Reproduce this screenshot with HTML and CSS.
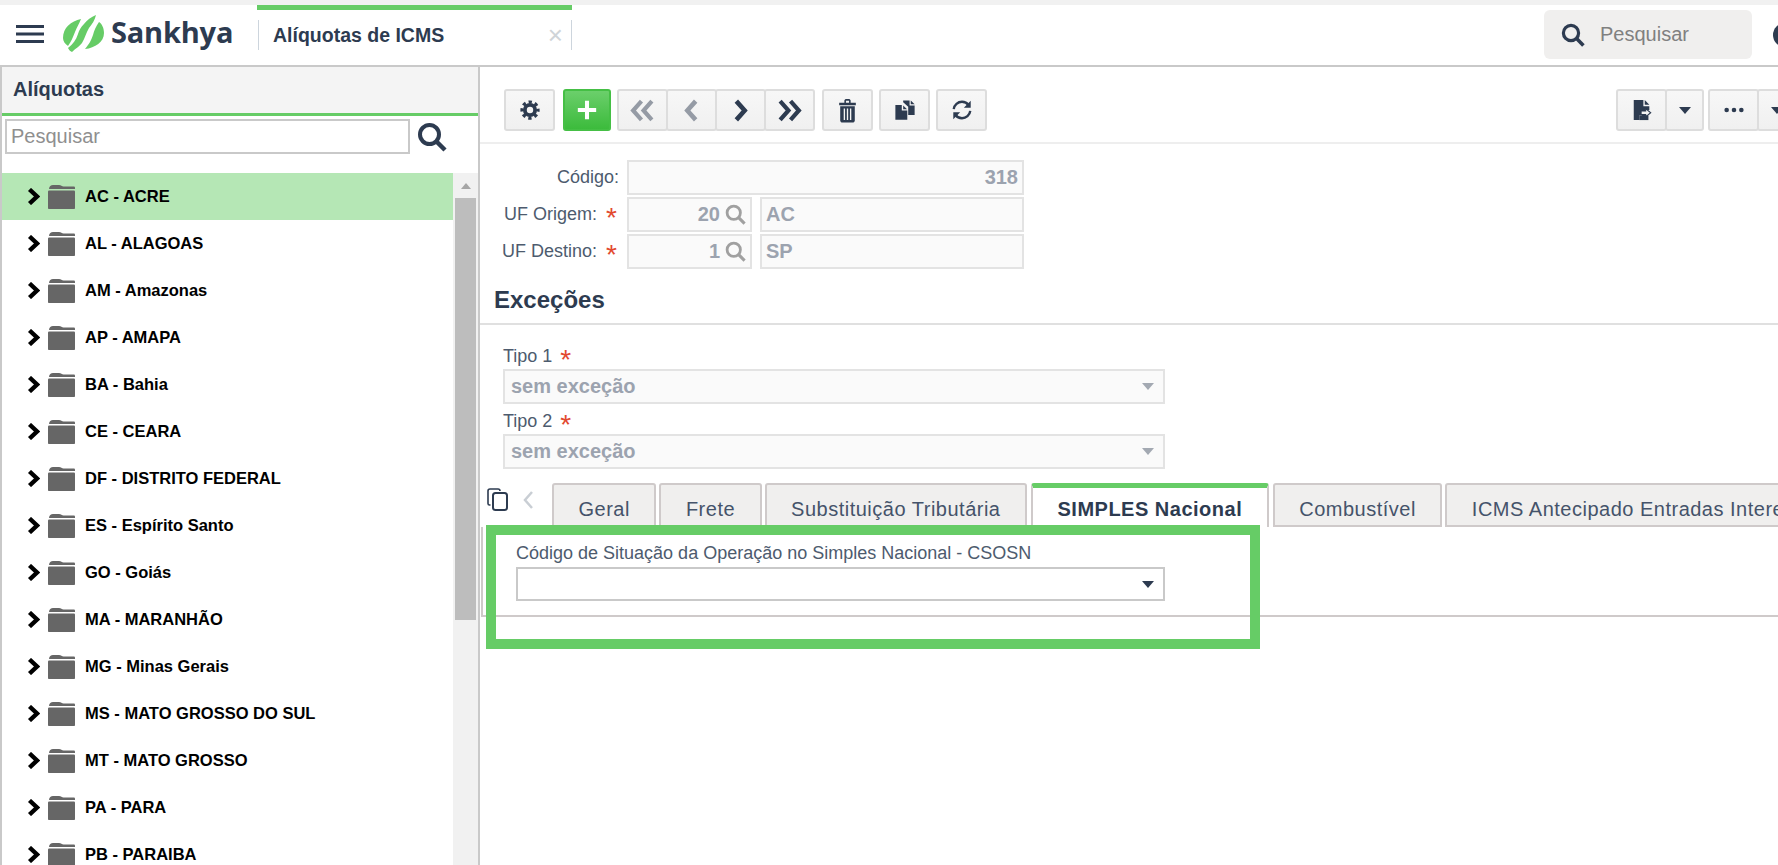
FILE: index.html
```html
<!DOCTYPE html>
<html lang="en">
<head>
  <meta charset="UTF-8" />
  <title>Alíquotas de ICMS | Sankhya</title>
  <link rel="stylesheet" href="styles.css">
</head>
<body>
  <svg class="defs" xmlns="http://www.w3.org/2000/svg">
    <symbol id="i-search" viewBox="0 0 30 30">
      <circle cx="12.5" cy="12.5" r="9.5" fill="none" stroke="currentColor" stroke-width="4"/>
      <path d="M19.5 19.5 L28 28" fill="none" stroke="currentColor" stroke-width="4.5"/>
    </symbol>
    <symbol id="i-arrow" viewBox="0 0 13 17">
      <path d="M2.5 1.5 L10 8.5 L2.5 15.5" fill="none" stroke="currentColor" stroke-width="4.4"/>
    </symbol>
    <symbol id="i-folder" viewBox="0 0 27 25">
      <path d="M1 5 C1 2.5 3 1 5 1 H11 C13 1 14 2.5 15.5 2.5 H26 C26.6 2.5 27 3 27 4 V5 Z" fill="currentColor"/>
      <path d="M0 8 C0 7 .5 6.5 1 6.5 H26 C26.5 6.5 27 7 27 8 V24 C27 24.6 26.5 25 26 25 H1 C.5 25 0 24.6 0 24 Z" fill="currentColor"/>
    </symbol>
    <symbol id="i-double-left" viewBox="0 0 24 22">
      <path d="M11 2 L3 11 L11 20 M21 2 L13 11 L21 20" fill="none" stroke="currentColor" stroke-width="4"/>
    </symbol>
    <symbol id="i-left" viewBox="0 0 24 22">
      <path d="M16 2 L8 11 L16 20" fill="none" stroke="currentColor" stroke-width="4.4"/>
    </symbol>
    <symbol id="i-right" viewBox="0 0 24 22">
      <path d="M8 2 L16 11 L8 20" fill="none" stroke="currentColor" stroke-width="4.4"/>
    </symbol>
    <symbol id="i-double-right" viewBox="0 0 24 22">
      <path d="M3 2 L11 11 L3 20 M13 2 L21 11 L13 20" fill="none" stroke="currentColor" stroke-width="4"/>
    </symbol>
  </svg>

  <div class="top-strip"></div>

  <header class="app-header">
    <svg class="burger" viewBox="0 0 28 18">
      <path d="M0 1.5 H28 M0 9 H28 M0 16.5 H28" stroke="#2d3b50" stroke-width="3"/>
    </svg>
    <svg class="logo-mark" viewBox="0 0 41 37">
      <path d="M0 23 C0 13 8 6 18 4 C16 9 14 12 12 17 C10 22 8 27 5 31 C2 29 0 26 0 23Z" fill="#66cc66"/>
      <path d="M21 9 C24 5 28 2 33 0 C32 5 29 9 26 13 C23 18 22 23 19 28 C17 31 13 33 9 37 C7 36 6 35 5 33 C10 29 13 25 15 19 C16 15 18 12 21 9Z" fill="#66cc66"/>
      <path d="M36 7 C39 9 41 13 41 18 C41 27 32 33 22 34 C26 29 28 26 30 20 C31 16 33 11 36 7Z" fill="#66cc66"/>
    </svg>
    <span class="logo-text">Sankhya</span>
    <div class="page-tab">
      <div class="page-tab-inner">
        <span>Alíquotas de ICMS</span>
        <span class="page-tab-close">×</span>
      </div>
    </div>
    <div class="global-search">
      <svg class="global-search-icon"><use href="#i-search"/></svg>
      <span>Pesquisar</span>
    </div>
    <div class="user-dot"></div>
  </header>

  <div class="main">
    <aside class="side-panel">
      <div class="side-title">Alíquotas</div>
      <div class="side-search">
        <input class="side-input" type="text" placeholder="Pesquisar" />
        <svg class="side-search-icon"><use href="#i-search"/></svg>
      </div>
      <div class="tree">
        <ul class="tree-list">
          <li class="tree-row selected"><svg class="tree-arrow"><use href="#i-arrow"/></svg><svg class="tree-folder"><use href="#i-folder"/></svg>AC - ACRE</li>
          <li class="tree-row"><svg class="tree-arrow"><use href="#i-arrow"/></svg><svg class="tree-folder"><use href="#i-folder"/></svg>AL - ALAGOAS</li>
          <li class="tree-row"><svg class="tree-arrow"><use href="#i-arrow"/></svg><svg class="tree-folder"><use href="#i-folder"/></svg>AM - Amazonas</li>
          <li class="tree-row"><svg class="tree-arrow"><use href="#i-arrow"/></svg><svg class="tree-folder"><use href="#i-folder"/></svg>AP - AMAPA</li>
          <li class="tree-row"><svg class="tree-arrow"><use href="#i-arrow"/></svg><svg class="tree-folder"><use href="#i-folder"/></svg>BA - Bahia</li>
          <li class="tree-row"><svg class="tree-arrow"><use href="#i-arrow"/></svg><svg class="tree-folder"><use href="#i-folder"/></svg>CE - CEARA</li>
          <li class="tree-row"><svg class="tree-arrow"><use href="#i-arrow"/></svg><svg class="tree-folder"><use href="#i-folder"/></svg>DF - DISTRITO FEDERAL</li>
          <li class="tree-row"><svg class="tree-arrow"><use href="#i-arrow"/></svg><svg class="tree-folder"><use href="#i-folder"/></svg>ES - Espírito Santo</li>
          <li class="tree-row"><svg class="tree-arrow"><use href="#i-arrow"/></svg><svg class="tree-folder"><use href="#i-folder"/></svg>GO - Goiás</li>
          <li class="tree-row"><svg class="tree-arrow"><use href="#i-arrow"/></svg><svg class="tree-folder"><use href="#i-folder"/></svg>MA - MARANHÃO</li>
          <li class="tree-row"><svg class="tree-arrow"><use href="#i-arrow"/></svg><svg class="tree-folder"><use href="#i-folder"/></svg>MG - Minas Gerais</li>
          <li class="tree-row"><svg class="tree-arrow"><use href="#i-arrow"/></svg><svg class="tree-folder"><use href="#i-folder"/></svg>MS - MATO GROSSO DO SUL</li>
          <li class="tree-row"><svg class="tree-arrow"><use href="#i-arrow"/></svg><svg class="tree-folder"><use href="#i-folder"/></svg>MT - MATO GROSSO</li>
          <li class="tree-row"><svg class="tree-arrow"><use href="#i-arrow"/></svg><svg class="tree-folder"><use href="#i-folder"/></svg>PA - PARA</li>
          <li class="tree-row"><svg class="tree-arrow"><use href="#i-arrow"/></svg><svg class="tree-folder"><use href="#i-folder"/></svg>PB - PARAIBA</li>
        </ul>
        <div class="scrollbar">
          <div class="scroll-up"></div>
          <div class="scroll-thumb"></div>
        </div>
      </div>
    </aside>

    <section class="content">
      <div class="toolbar">
        <div class="tool-set">
          <button class="tool-btn">
            <svg class="tool-icon" viewBox="0 0 24 24">
              <circle cx="12" cy="12" r="5.6" fill="none" stroke="currentColor" stroke-width="4.2"/>
              <circle cx="12" cy="12" r="8.8" fill="none" stroke="currentColor" stroke-width="3.4" stroke-dasharray="3.6 3.31" stroke-dashoffset="1.8"/>
            </svg>
          </button>
          <button class="tool-btn add-btn">
            <svg class="tool-icon" viewBox="0 0 24 24"><path d="M12 2 V22 M2 12 H22" stroke="#fff" stroke-width="4.4"/></svg>
          </button>
          <div class="btn-group nav-group">
            <button class="tool-btn muted"><svg class="nav-icon"><use href="#i-double-left"/></svg></button>
            <button class="tool-btn muted"><svg class="nav-icon"><use href="#i-left"/></svg></button>
            <button class="tool-btn"><svg class="nav-icon"><use href="#i-right"/></svg></button>
            <button class="tool-btn"><svg class="nav-icon"><use href="#i-double-right"/></svg></button>
          </div>
          <button class="tool-btn">
            <svg class="tool-icon tool-icon-big" viewBox="0 0 24 24">
              <path d="M4 4.5 H9 V2.5 C9 1.5 10 1 11 1 H13 C14 1 15 1.5 15 2.5 V4.5 H20 V7 H4 Z M10.500 4.500 H13.500 V2.700 H10.500 Z" fill="currentColor" fill-rule="evenodd"/>
              <path d="M5 8 H19 V21.500 C19 22.500 18 23.500 17 23.500 H7 C6 23.500 5 22.500 5 21.500 Z" fill="currentColor"/>
              <path d="M9 10 V21 M12 10 V21 M15 10 V21" stroke="#f3f3f3" stroke-width="1.300"/>
            </svg>
          </button>
          <button class="tool-btn">
            <svg class="tool-icon" viewBox="0 0 24 24">
              <path d="M10 1.500 H17 V7 H22.500 V17.500 H15.500 V8.500 L10 3.500 Z" fill="currentColor"/>
              <path d="M18.300 1.500 L22.500 5.700 H18.300 Z" fill="currentColor"/>
              <path d="M1.500 6.500 H8.500 V12.500 H14.500 V22.500 H1.500 Z" fill="currentColor"/>
              <path d="M10 7 L14.200 11.200 H10 Z" fill="currentColor"/>
            </svg>
          </button>
          <button class="tool-btn">
            <svg class="tool-icon" viewBox="0 0 24 24">
              <path d="M3 11 C3.500 6.500 7.500 3 12 3 C15 3 17.500 4.300 19 6.500" fill="none" stroke="currentColor" stroke-width="2.600"/>
              <path d="M21 13 C20.500 17.500 16.500 21 12 21 C9 21 6.500 19.700 5 17.500" fill="none" stroke="currentColor" stroke-width="2.600"/>
              <path d="M21.500 2 V9.500 H14 Z M2.500 22 V14.500 H10 Z" fill="currentColor"/>
            </svg>
          </button>
        </div>
        <div class="tool-set tool-set-right">
          <div class="btn-group">
            <button class="tool-btn">
              <svg class="tool-icon" viewBox="0 0 24 24">
                <path d="M3 1 H13.500 V8 H20 V12 H12 V9 L20 15 L12 21 V18 H9 V23 H3 Z" fill="currentColor"/>
                <path d="M15 1 L20 6.300 H15 Z" fill="currentColor"/>
                <path d="M11 13 H16 V10.500 L21.500 15 L16 19.500 V17 H11 Z" fill="#f3f3f3" stroke="currentColor" stroke-width="1.200"/>
                <path d="M9 18 H19 V23 H9 Z" fill="currentColor"/>
              </svg>
            </button>
            <button class="tool-btn caret-btn"><span class="caret"></span></button>
          </div>
          <div class="btn-group">
            <button class="tool-btn">
              <svg class="tool-icon" viewBox="0 0 24 24">
                <circle cx="4" cy="12" r="2.500" fill="currentColor"/><circle cx="12" cy="12" r="2.500" fill="currentColor"/><circle cx="20" cy="12" r="2.500" fill="currentColor"/>
              </svg>
            </button>
            <button class="tool-btn caret-btn"><span class="caret"></span></button>
          </div>
        </div>
      </div>

      <div class="form-rows">
        <div class="form-row">
          <label class="form-label">Código:</label>
          <div class="field field-full align-right">318</div>
        </div>
        <div class="form-row">
          <label class="form-label">UF Origem:<span class="req">*</span></label>
          <div class="field field-code">20<svg class="field-search"><use href="#i-search"/></svg></div>
          <div class="field field-desc">AC</div>
        </div>
        <div class="form-row">
          <label class="form-label">UF Destino:<span class="req">*</span></label>
          <div class="field field-code">1<svg class="field-search"><use href="#i-search"/></svg></div>
          <div class="field field-desc">SP</div>
        </div>
      </div>

      <h2 class="section-title">Exceções</h2>

      <div class="exceptions">
        <label class="stack-label">Tipo 1<span class="req">*</span></label>
        <div class="combo disabled">sem exceção<span class="caret"></span></div>
        <label class="stack-label">Tipo 2<span class="req">*</span></label>
        <div class="combo disabled">sem exceção<span class="caret"></span></div>
      </div>

      <div class="tabs-area">
        <div class="tab-strip">
          <div class="tab-tools">
            <svg class="tab-copy" viewBox="0 0 23 23">
              <path d="M3.500 17 H2.500 C1.500 17 1 16.500 1 15.500 V3 C1 2 1.800 1 3 1 H11 C12 1 13 1.800 13 3" fill="none" stroke="currentColor" stroke-width="1.600"/>
              <rect x="6" y="5" width="14" height="17" rx="2.500" fill="none" stroke="currentColor" stroke-width="2"/>
            </svg>
            <svg class="tab-prev" viewBox="0 0 11 18"><path d="M9 1 L2 9 L9 17" fill="none" stroke="currentColor" stroke-width="2.500"/></svg>
          </div>
          <div class="tab">Geral</div>
          <div class="tab">Frete</div>
          <div class="tab">Substituição Tributária</div>
          <div class="tab active">SIMPLES Nacional</div>
          <div class="tab">Combustível</div>
          <div class="tab">ICMS Antecipado Entradas Interestaduais</div>
        </div>
        <div class="tab-panel">
          <label class="panel-label">Código de Situação da Operação no Simples Nacional - CSOSN</label>
          <div class="combo combo-panel"><span class="caret"></span></div>
        </div>
        <div class="highlight-box"></div>
      </div>
    </section>
  </div>
</body>
</html>
```

FILE: styles.css
```css
* {
  box-sizing: border-box;
}
html, body {
  height: 100%;
}
body {
  font-family: 'Liberation Sans', Arial, sans-serif;
  background-color: #ffffff;
  color: #2d3b50;
  margin: 0;
  overflow: hidden;
}
.defs {
  display: none;
}
.top-strip {
  height: 5px;
  background-color: #f1f1f1;
}

/* header */
.app-header {
  display: flex;
  align-items: center;
  height: 62px;
  padding-left: 16px;
  border-bottom: 2px solid #c9c9c9;
  overflow: hidden;
}
.burger {
  width: 28px;
  height: 18px;
  margin-top: -3px;
}
.logo-mark {
  width: 41px;
  height: 37px;
  margin-left: 19px;
  margin-top: -3px;
}
.logo-text {
  width: 121px;
  margin-left: 7px;
  margin-top: -7px;
  font-family: 'Open Sans', sans-serif;
  font-size: 29px;
  font-weight: 700;
  letter-spacing: -0.2px;
}
.page-tab {
  align-self: flex-start;
  width: 315px;
  height: 45px;
  margin-left: 25px;
  padding-top: 10px;
  border-top: 5px solid #66cc66;
}
.page-tab-inner {
  display: flex;
  justify-content: space-between;
  align-items: center;
  height: 30px;
  padding: 0 8px 0 14px;
  margin-left: 1px;
  border-left: 1px solid #cdd5dd;
  border-right: 1px solid #cdd5dd;
  font-size: 19.500px;
  font-weight: bold;
}
.page-tab-close {
  font-size: 26px;
  font-weight: normal;
  color: #cfd4d8;
}
.global-search {
  display: flex;
  align-items: center;
  width: 208px;
  height: 49px;
  margin-left: auto;
  margin-top: -1px;
  padding-left: 17px;
  background-color: #f0efee;
  border-radius: 6px;
  font-size: 20px;
  color: #808080;
}
.global-search-icon {
  width: 24px;
  height: 24px;
  margin-right: 15px;
  color: #2d3b50;
}
.user-dot {
  flex: none;
  width: 24px;
  height: 24px;
  margin-left: 21px;
  margin-right: -19px;
  margin-top: -1px;
  border-radius: 50%;
  background-color: #2d3b50;
}

.main {
  display: flex;
  height: 798px;
}

/* left panel */
.side-panel {
  flex: none;
  width: 480px;
  border-left: 2px solid #c9c9c9;
  border-right: 2px solid #c9c9c9;
  overflow: hidden;
}
.side-title {
  height: 49px;
  padding: 11px 11px 0;
  background-color: #f4f4f4;
  border-bottom: 3px solid #66cc66;
  font-size: 20px;
  font-weight: bold;
}
.side-search {
  display: flex;
  align-items: center;
  gap: 7px;
  padding: 3px 0 0 3px;
}
.side-input {
  width: 405px;
  height: 35px;
  padding: 0 4px;
  border: 2px solid #c9c9c9;
  font-family: inherit;
  font-size: 20px;
}
.side-input::placeholder {
  color: #8f8f8f;
}
.side-search-icon {
  width: 30px;
  height: 30px;
  color: #2d3b50;
}
.tree {
  display: flex;
  margin-top: 19px;
}
.tree-list {
  flex: 1;
  margin: 0;
  padding: 0;
  list-style: none;
}
.tree-row {
  display: flex;
  align-items: center;
  height: 47px;
  padding-left: 25px;
  font-size: 16.500px;
  font-weight: bold;
  color: #000000;
}
.tree-row.selected {
  background-color: #b5e7b5;
}
.tree-arrow {
  width: 13px;
  height: 17px;
  color: #000000;
}
.tree-folder {
  width: 27px;
  height: 25px;
  margin-left: 8px;
  margin-right: 10px;
  color: #666666;
}
.scrollbar {
  flex: none;
  width: 25px;
  background-color: #f1f1f1;
}
.scroll-up {
  width: 0;
  height: 0;
  margin: 10px auto 9px;
  border-left: 5px solid transparent;
  border-right: 5px solid transparent;
  border-bottom: 6px solid #a6a6a6;
}
.scroll-thumb {
  height: 422px;
  margin: 0 2px;
  background-color: #bdbdbd;
}

/* toolbar */
.content {
  flex: 1;
  min-width: 0;
  overflow: hidden;
}
.toolbar {
  display: flex;
  justify-content: space-between;
  height: 77px;
  padding: 22px 0 0 24px;
  margin-right: -18px;
  border-bottom: 2px solid #eeeeee;
}
.tool-set {
  display: flex;
  gap: 6px;
}
.tool-set-right {
  gap: 4px;
}
.btn-group {
  display: flex;
}
.btn-group .tool-btn + .tool-btn {
  margin-left: -2px;
}
.tool-btn {
  display: flex;
  align-items: center;
  justify-content: center;
  width: 51px;
  height: 42px;
  padding: 0;
  background: linear-gradient(#f7f7f7, #f0f0f0);
  border: 2px solid #dddddd;
  border-radius: 3px;
  color: #2d3b50;
}
.tool-btn.muted {
  color: #959ba5;
}
.tool-btn.caret-btn {
  width: 39px;
}
.add-btn {
  width: 48px;
  margin-left: 2px;
  background: linear-gradient(#6bcf6b, #3cbb3c);
  border-color: #45bf45;
}
.nav-group {
  margin-right: 1px;
}
.nav-group .tool-btn {
  width: 51px;
}
.tool-icon {
  width: 22px;
  height: 22px;
}
.nav-icon {
  width: 25px;
  height: 23px;
}
.tool-icon-big {
  width: 25px;
  height: 25px;
}
.caret {
  display: inline-block;
  width: 0;
  height: 0;
  border-left: 6px solid transparent;
  border-right: 6px solid transparent;
  border-top: 7px solid #2d3b50;
}

/* form */
.form-rows {
  padding-top: 16px;
}
.form-row {
  display: flex;
  height: 35px;
  margin-bottom: 2px;
}
.form-label {
  width: 139px;
  margin-right: 8px;
  line-height: 35px;
  text-align: right;
  white-space: nowrap;
  font-size: 18px;
  color: #4d5b6e;
}
.req {
  margin-left: 9px;
  margin-right: 2px;
  font-size: 28px;
  line-height: 20px;
  vertical-align: -7px;
  color: #e2492f;
}
.field {
  display: flex;
  align-items: center;
  height: 35px;
  padding: 0 4px;
  background-color: #fafafa;
  border: 2px solid #e3e3e3;
  font-size: 20px;
  font-weight: bold;
  color: #9ca3af;
}
.field-full {
  width: 397px;
}
.align-right {
  justify-content: flex-end;
}
.field-code {
  justify-content: flex-end;
  width: 125px;
  margin-right: 8px;
}
.field-desc {
  width: 264px;
}
.field-search {
  width: 21px;
  height: 21px;
  margin-left: 5px;
  color: #a0a0a0;
}
.section-title {
  height: 40px;
  margin: 16px 0 0;
  padding: 0 0 0 14px;
  border-bottom: 2px solid #e0e0e0;
  font-size: 24px;
  line-height: 30px;
  color: #2d3b50;
}
.exceptions {
  padding: 19px 0 0 23px;
}
.stack-label {
  display: block;
  height: 25px;
  font-size: 18px;
  line-height: 24px;
  color: #4d5b6e;
}
.stack-label .req {
  margin-left: 8px;
}
.combo {
  display: flex;
  align-items: center;
  justify-content: space-between;
  width: 662px;
  height: 34px;
  padding: 0 9px 0 6px;
  background-color: #ffffff;
  border: 2px solid #c9c9c9;
  font-size: 20px;
  font-weight: bold;
}
.combo .caret {
  margin-left: auto;
}
.combo.disabled {
  height: 35px;
  margin-bottom: 5px;
  background-color: #fafafa;
  border-color: #e3e3e3;
  color: #9ca3af;
}
.combo.disabled .caret {
  border-top-color: #a3a9b2;
}
.combo-panel {
  width: 649px;
}

/* tabs */
.tabs-area {
  position: relative;
  margin-top: 14px;
}
.tab-strip {
  display: flex;
  align-items: flex-start;
  height: 44px;
  white-space: nowrap;
}
.tab-tools {
  flex: none;
  display: flex;
  align-items: center;
  width: 72px;
  height: 44px;
  padding: 0 0 11px 7px;
}
.tab-copy {
  width: 23px;
  height: 23px;
  color: #2d3b50;
}
.tab-prev {
  width: 11px;
  height: 18px;
  margin-left: 13px;
  color: #c9ced4;
}
.tab {
  flex: none;
  height: 44px;
  margin-right: 3px;
  padding: 0 24.500px;
  line-height: 48px;
  background-color: #f0efee;
  border: 2px solid #cfcaca;
  border-radius: 3px 3px 0 0;
  font-size: 20px;
  letter-spacing: 0.5px;
  color: #45536a;
}
.tab.active {
  margin-left: 1px;
  margin-right: 4px;
  line-height: 42px;
  background-color: #ffffff;
  border-top: 5px solid #66cc66;
  border-bottom: none;
  font-weight: bold;
  color: #2d3b50;
}
.tab-panel {
  height: 90px;
  margin-left: 1px;
  padding: 16px 0 0 33px;
  border-left: 2px solid #cfcaca;
  border-bottom: 2px solid #cfcaca;
}
.panel-label {
  display: block;
  height: 24px;
  font-size: 18px;
  line-height: 20px;
  color: #4d5b6e;
}
.highlight-box {
  position: absolute;
  left: 6px;
  top: 42px;
  width: 774px;
  height: 124px;
  border: 10px solid #66cc66;
}
```
